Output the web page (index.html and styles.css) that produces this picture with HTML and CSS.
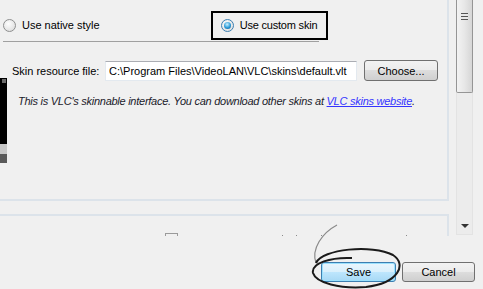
FILE: index.html
```html
<!DOCTYPE html>
<html lang="en">
<head>
  <meta charset="UTF-8">
  <title>VLC Preferences | Interface</title>
  <link rel="stylesheet" href="styles.css">
</head>
<body>
  <div class="dialog">
    <div class="scroll-area">
      <div class="content">
        <section class="panel main-panel">
          <div class="style-row">
            <label class="radio native"><span class="radio-dot"></span>Use native style</label>
            <label class="radio custom"><span class="radio-dot checked"></span>Use custom skin</label>
          </div>
          <div class="separator"></div>
          <div class="skin-section">
            <div class="preview">
              <div class="preview-mark"></div>
              <div class="preview-bar"></div>
              <div class="preview-bar dark"></div>
            </div>
            <div class="skin-body">
              <div class="file-row">
                <span class="file-label">Skin resource file:</span>
                <input class="file-input" type="text" value="C:\Program Files\VideoLAN\VLC\skins\default.vlt">
                <button class="btn">Choose...</button>
              </div>
              <p class="hint">This is VLC's skinnable interface. You can download other skins at <a href="#">VLC skins website</a>.</p>
            </div>
          </div>
        </section>
        <section class="panel next-panel">
          <div class="next-row">
            <span class="check-edge"></span>
            <span class="dot" style="margin-left: 104px"></span>
            <span class="dot" style="margin-left: 13px"></span>
            <span class="dot" style="margin-left: 24px"></span>
            <span class="dot" style="margin-left: 84px"></span>
          </div>
        </section>
      </div>
      <div class="scrollbar">
        <div class="thumb"><span class="grip"></span></div>
        <div class="track"></div>
        <div class="arrow-down"></div>
      </div>
    </div>

    <div class="buttons">
      <button class="btn btn-default">Save</button>
      <button class="btn btn-cancel">Cancel</button>
    </div>

    <!-- cerchio disegnato a mano attorno a Save -->
    <svg class="annotation" width="483" height="289" viewBox="0 0 483 289">
      <path d="M337 225 C322 233 311 249 316 263" fill="none" stroke="#8a8a8a" stroke-width="1.2"/>
      <path d="M316 263 C322 249 372 244 393 255 C407 264 399 283 366 287 C340 289 316 283 313 273 C311 263 331 257 352 258" fill="none" stroke="#1a1a1a" stroke-width="2"/>
    </svg>
  </div>
</body>
</html>
```

FILE: styles.css
```css
html, body {
  margin: 0;
  background-color: #f0f0f0;
}
body {
  font-family: 'Liberation Sans', Arial, sans-serif;
  font-size: 11px;
  color: #000;
}
.dialog {
  position: relative;
  width: 483px;
  height: 289px;
  overflow: hidden;
}
.scroll-area {
  display: flex;
  height: 236px;
  overflow: hidden;
}
.content {
  width: 449px;
  flex-shrink: 0;
}
.panel {
  border-right: 2px solid #dce3ea;
}
.main-panel {
  height: 199px;
  border-bottom: 2px solid #dce3ea;
}
.style-row {
  display: flex;
  align-items: center;
  height: 41px;
}
.radio {
  display: flex;
  align-items: center;
  gap: 6px;
}
.native {
  margin-left: 3px;
  margin-top: 9px;
}
.custom {
  margin-left: 111px;
  margin-top: 9px;
  width: 105px;
  height: 25px;
  padding-left: 8px;
  border: 2px solid #000;
  letter-spacing: -0.2px;
}
.radio-dot {
  width: 11px;
  height: 11px;
  border-radius: 50%;
  border: 1px solid #8e8f8f;
  background: radial-gradient(circle at 40% 35%, #fefefe, #d7d7d7);
  position: relative;
}
.radio-dot.checked {
  border-color: #3c7fb1;
}
.radio-dot.checked::after {
  content: "";
  position: absolute;
  left: 2px;
  top: 2px;
  width: 7px;
  height: 7px;
  border-radius: 50%;
  background: radial-gradient(circle at 45% 35%, #c9f0ff, #2b9bd8 55%, #0c4d86);
}
.separator {
  margin-left: 3px;
  width: 316px;
  height: 1px;
  background-color: #a0a0a0;
}
.skin-section {
  display: flex;
  align-items: flex-start;
}
.preview {
  flex-shrink: 0;
  width: 7px;
  height: 85px;
  margin-top: 36px;
  background-color: #000;
  display: flex;
  flex-direction: column;
}
.preview-mark {
  width: 4px;
  height: 4px;
  margin: 1px 0 auto 2px;
  background-color: #6a6a6a;
}
.preview-bar {
  height: 10px;
  background-color: #c8c8c8;
}
.preview-bar.dark {
  height: 9px;
  background-color: #5a5a5a;
}
.skin-body {
  flex: 1;
}
.file-row {
  display: flex;
  align-items: center;
  margin-top: 18px;
  margin-left: 5px;
}
.file-label {
  width: 93px;
}
.file-input {
  box-sizing: border-box;
  width: 252px;
  height: 20px;
  margin: 0;
  padding: 0 3px;
  font-family: inherit;
  font-size: 11px;
  border: 1px solid #e3e9ef;
  border-top-color: #abadb3;
  background-color: #fff;
}
.btn {
  box-sizing: border-box;
  height: 21px;
  margin-left: 7px;
  padding: 0;
  font-family: inherit;
  font-size: 11px;
  color: #000;
  border: 1px solid #707070;
  border-radius: 3px;
  background: linear-gradient(#f2f2f2, #ebebeb 50%, #dddddd 50%, #cfcfcf);
}
.file-row .btn {
  width: 74px;
}
.hint {
  margin: 14px 0 0 11px;
  font-style: italic;
  letter-spacing: -0.26px;
  color: #1a1a2a;
}
.hint a {
  color: #3434ff;
}
.next-panel {
  margin-top: 13px;
  height: 40px;
  border-top: 2px solid #dce3ea;
}
.next-row {
  display: flex;
  align-items: flex-start;
  padding-top: 17px;
}
.check-edge {
  margin-left: 165px;
  width: 11px;
  height: 3px;
  border: 1px solid #9a9a9a;
  border-bottom: none;
}
.dot {
  width: 1px;
  height: 1px;
  margin-top: 2px;
  background-color: #8a8a8a;
}
.scrollbar {
  position: relative;
  width: 17px;
  margin-left: 7px;
  display: flex;
  flex-direction: column;
  height: 235px;
}
.thumb {
  height: 93px;
  box-sizing: border-box;
  border: 1px solid #959595;
  border-top: none;
  border-radius: 0 0 2px 2px;
  background: linear-gradient(to right, #f3f3f3, #e7e7e7 50%, #d6d6d6);
  display: flex;
  justify-content: center;
}
.grip {
  margin-top: 13px;
  width: 7px;
  height: 7px;
  background: repeating-linear-gradient(#555 0, #555 1px, #e8e8e8 1px, #e8e8e8 3px);
}
.track {
  flex: 1;
  border-left: 1px solid #e3e3e3;
  border-right: 1px solid #e3e3e3;
  border-bottom: 1px solid #e3e3e3;
  background-color: #ececec;
}
.arrow-down {
  position: absolute;
  left: 5px;
  bottom: 7px;
  width: 0;
  height: 0;
  border-left: 4px solid transparent;
  border-right: 4px solid transparent;
  border-top: 4px solid #333;
}
.buttons {
  display: flex;
  justify-content: flex-end;
  padding: 26px 8px 0 0;
  gap: 6px;
}
.buttons .btn {
  margin: 0;
  width: 73px;
  height: 20px;
}
.buttons .btn-default {
  width: 75px;
  border-color: #3c7fb1;
  background: linear-gradient(#eaf6fd, #d9f0fc 50%, #bee6fd 50%, #a7d9f5);
  box-shadow: inset 0 0 0 1px #9be1fd;
}
.annotation {
  position: absolute;
  left: 0;
  top: 0;
  pointer-events: none;
}
```
